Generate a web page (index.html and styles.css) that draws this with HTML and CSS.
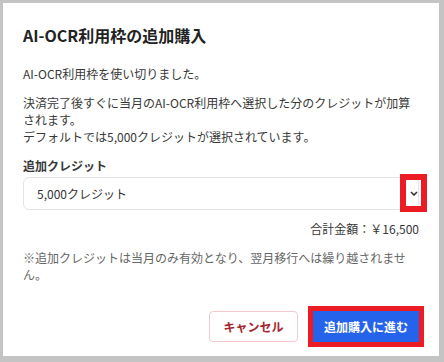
FILE: index.html
```html
<!DOCTYPE html>
<html lang="ja">
<head>
    <meta charset="UTF-8">
    <meta name="viewport" content="width=device-width, initial-scale=1.0">
    <title>AI-OCR利用枠の追加購入</title>
    <link rel="stylesheet" href="styles.css">
</head>
<body>
    <div class="dialog">
        <h2 class="dialog-title">AI-OCR利用枠の追加購入</h2>

        <p class="text">AI-OCR利用枠を使い切りました。</p>
        <p class="text">決済完了後すぐに当月のAI-OCR利用枠へ選択した分のクレジットが加算されます。<br>デフォルトでは5,000クレジットが選択されています。</p>

        <label class="field-label" for="credit">追加クレジット</label>
        <div class="select-wrap">
            <select id="credit" class="select">
                <option>5,000クレジット</option>
                <option>10,000クレジット</option>
                <option>20,000クレジット</option>
            </select>
            <span class="select-arrow">
                <svg width="8" height="5" viewBox="0 0 8 5"><path d="M1 1l3 3 3-3" fill="none" stroke="#333" stroke-width="1.6"/></svg>
            </span>
        </div>

        <p class="total">合計金額：￥16,500</p>

        <p class="note">※追加クレジットは当月のみ有効となり、翌月移行へは繰り越されません。</p>

        <div class="actions">
            <button class="btn-cancel">キャンセル</button>
            <button class="btn-submit">追加購入に進む</button>
        </div>
    </div>
</body>
</html>
```
FILE: styles.css
```css
/* reset */
* {
    margin: 0;
    padding: 0;
    box-sizing: border-box;
    font-family: "Noto Sans CJK JP", "Noto Sans", sans-serif;
}

body {
    background-color: #c4c4c4;
    color: #383838;
    font-size: 12px;
    line-height: 17px;
}

/* modal */
.dialog {
    background-color: #fff;
    margin: 3px 5px 0 3px;
    padding: 20px 20px 14px;
}

.dialog-title {
    font-size: 16px;
    line-height: 24px;
    font-weight: 700;
    color: #222;
    margin-bottom: 18px;
}

.text {
    margin-bottom: 12px;
}

.field-label {
    display: block;
    font-weight: 700;
    margin-bottom: 3px;
}

/* select */
.select-wrap {
    position: relative;
}

.select {
    appearance: none;
    -webkit-appearance: none;
    width: 100%;
    height: 33px;
    padding: 0 13px;
    font-size: 12px;
    color: #333;
    background-color: #fff;
    border: 1px solid #e4e4e4;
    border-radius: 6px;
    outline: none;
}

.select-arrow {
    position: absolute;
    top: 3px;
    right: -2px;
    width: 15px;
    height: 26px;
    display: flex;
    align-items: center;
    justify-content: center;
    outline: 6px solid #ec1c24; /* red annotation box */
    pointer-events: none;
}

.total {
    margin-top: 10px;
    text-align: right;
}

.note {
    margin-top: 12px;
    color: #666;
}

/* buttons */
.actions {
    display: flex;
    justify-content: flex-end;
    gap: 15px;
    margin-top: 28px;
}

.btn-cancel,
.btn-submit {
    height: 31px;
    font-size: 12px;
    font-weight: 700;
    cursor: pointer;
}

.btn-cancel {
    width: 89px;
    background-color: #fff;
    color: #a3262d;
    border: 1px solid #f7c9cc;
    border-radius: 4px;
}

.btn-submit {
    width: 106px;
    background-color: #2563eb;
    color: #fff;
    border: none;
    border-radius: 0;
    outline: 5px solid #ec1c24;
}
```
